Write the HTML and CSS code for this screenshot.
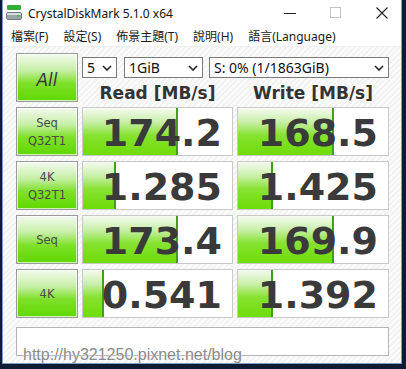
FILE: index.html
```html
<!DOCTYPE html>
<html lang="zh-Hant">
<head>
    <meta charset="UTF-8" />
    <title>CrystalDiskMark 5.1.0 x64</title>
    <link rel="stylesheet" href="styles.css">
</head>
<body>
   <div id="win">
       <div class="titlebar">
           <svg class="appicon" width="16" height="16" viewBox="0 0 16 16">
               <rect x="1" y="1" width="14" height="5" rx="1" fill="#2fae3a"/>
               <rect x="0.5" y="8.5" width="15" height="7" rx="1.5" fill="#d6dde0" stroke="#6d7a80"/>
               <rect x="1" y="11" width="14" height="4" fill="#9aa6ab"/>
               <circle cx="12.5" cy="12" r="1.2" fill="#35c43c"/>
           </svg>
           <span class="title">CrystalDiskMark 5.1.0 x64</span>
           <div class="ctls">
               <span class="ctl">
                   <svg width="12" height="12" viewBox="0 0 12 12"><path d="M0 6.5h12" stroke="#222" stroke-width="1"/></svg>
               </span>
               <span class="ctl">
                   <svg width="12" height="12" viewBox="0 0 12 12"><rect x="0.5" y="0.5" width="10" height="10" fill="none" stroke="#c4c4c4"/></svg>
               </span>
               <span class="ctl">
                   <svg width="12" height="12" viewBox="0 0 12 12"><path d="M0.5 0.5l11 11M11.5 0.5l-11 11" stroke="#222" stroke-width="1.1"/></svg>
               </span>
           </div>
       </div>
       <ul class="menu">
           <li>檔案(F)</li>
           <li>設定(S)</li>
           <li>佈景主題(T)</li>
           <li>說明(H)</li>
           <li>語言(Language)</li>
       </ul>
       <div class="main">
           <div class="grid">
               <div class="btn all">All</div>
               <div class="top">
                   <div class="opts">
                       <div class="sel s1"><span>5</span><svg width="10" height="6" viewBox="0 0 10 6"><path d="M1 1l4 4 4-4" fill="none" stroke="#222" stroke-width="1.6"/></svg></div>
                       <div class="sel s2"><span>1GiB</span><svg width="10" height="6" viewBox="0 0 10 6"><path d="M1 1l4 4 4-4" fill="none" stroke="#222" stroke-width="1.6"/></svg></div>
                       <div class="sel s3"><span>S: 0% (1/1863GiB)</span><svg width="10" height="6" viewBox="0 0 10 6"><path d="M1 1l4 4 4-4" fill="none" stroke="#222" stroke-width="1.6"/></svg></div>
                   </div>
                   <div class="heads">
                       <b>Read [MB/s]</b>
                       <b>Write [MB/s]</b>
                   </div>
               </div>

               <div class="btn">Seq<br>Q32T1</div>
               <div class="cell"><i style="width:64%"></i><span>174.2</span></div>
               <div class="cell"><i style="width:64%"></i><span>168.5</span></div>

               <div class="btn">4K<br>Q32T1</div>
               <div class="cell"><i style="width:22%"></i><span>1.285</span></div>
               <div class="cell"><i style="width:23%"></i><span>1.425</span></div>

               <div class="btn">Seq</div>
               <div class="cell"><i style="width:64%"></i><span>173.4</span></div>
               <div class="cell"><i style="width:64%"></i><span>169.9</span></div>

               <div class="btn">4K</div>
               <div class="cell"><i style="width:14%"></i><span>0.541</span></div>
               <div class="cell"><i style="width:23%"></i><span>1.392</span></div>
           </div>
           <div class="comment"></div>
           <p class="mark">http://hy321250.pixnet.net/blog</p>
       </div>
   </div>
</body>
</html>
```

FILE: styles.css
```css
*{
    padding:0;
    margin:0;
    list-style:none;
    box-sizing:border-box;
}
body{
    width: 406px;
    height: 369px;
    background:#0d1b35;
    overflow:hidden;
    font-family:"Noto Sans","Noto Sans CJK TC",sans-serif;
}
#win{
    width: 400px;
    height: 364px;
    margin-left:2px;
    background:#fff;
    border:1px solid #7f9cc4;
    border-top:none;
    display:flex;
    flex-direction:column;
    overflow:hidden;
    position:relative;
}
.titlebar{
    height: 26px;
    display:flex;
    align-items:center;
    padding-left:3px;
}
.appicon{
    display:block;
    margin-top:-2px;
}
.title{
    margin-left:6px;
    font-size:12px;
    color:#111;
}
.ctls{
    margin-left:auto;
    margin-right:-4px;
    display:flex;
    align-self:stretch;
}
.ctl{
    width: 46px;
    display:flex;
    align-items:center;
    justify-content:center;
}
.menu{
    height: 21px;
    display:flex;
    align-items:center;
    padding-left:8px;
    gap:15px;
    font-family:"Noto Sans","Noto Sans CJK TC",sans-serif;
    font-size:12px;
    color:#1a1a1a;
    border-bottom:1px solid #f0f0f0;
}
.main{
    flex:1;
    padding:6px 11px 0 13px;
    background:repeating-linear-gradient(135deg,#f3f3f3 0 2px,#fbfbfb 2px 4px);
}
.grid{
    display:grid;
    grid-template-columns:62px 151px 152px;
    grid-auto-rows:49px;
    column-gap:4px;
    row-gap:5px;
}
.btn{
    border:1px solid #9a9a9a;
    box-shadow:inset 0 0 0 1px rgba(255,255,255,0.7);
    background:linear-gradient(#f4faf0 0%,#c6efa6 35%,#7fe02a 62%,#5fd800 100%);
    display:flex;
    align-items:center;
    justify-content:center;
    text-align:center;
    font-family:"DejaVu Sans",sans-serif;
    font-size:11.5px;
    line-height:18px;
    color:#4a4a4a;
}
.all{
    font-size:17px;
    font-style:italic;
    color:#3a3a3a;
    padding-top:4px;
}
.top{
    grid-column:2 / 4;
    display:flex;
    flex-direction:column;
}
.opts{
    display:flex;
    margin-top:4px;
    height: 21px;
}
.sel{
    border:1px solid #7a7a7a;
    background:#fff;
    display:flex;
    align-items:center;
    justify-content:space-between;
    padding:0 4px 0 4px;
    font-size:14px;
    color:#111;
}
.s1{
    width: 35px;
}
.s2{
    width: 79px;
    margin-left:7px;
}
.s3{
    flex:1;
    margin-left:6px;
}
.heads{
    display:grid;
    grid-template-columns:151px 152px;
    column-gap:4px;
    margin-top:4px;
}
.heads b{
    text-align:center;
    font-family:"DejaVu Sans",sans-serif;
    font-size:17px;
    line-height:22px;
    color:#333;
}
.cell{
    border:1px solid #c9c9c9;
    background:#fff;
    position:relative;
    display:flex;
    align-items:center;
    justify-content:flex-end;
    padding-right:10px;
}
.cell i{
    position:absolute;
    top:0;
    bottom:0;
    left:0;
    background:linear-gradient(#f6fbf2 0%,#c8efa8 30%,#86e230 58%,#6fdc08 100%);
    border-right:2px solid #3f9f18;
}
.cell span{
    position:relative;
    font-family:"DejaVu Sans",sans-serif;
    font-weight:bold;
    font-size:38px;
    line-height:1;
    color:#3a3a3a;
    margin-top:2px;
}
.comment{
    margin-top:9px;
    height: 29px;
    width: 373px;
    border:1px solid #b5b5b5;
    background:#fff;
}
.mark{
    position:absolute;
    left:20px;
    top:346px;
    font-family:"Liberation Sans",Arial,sans-serif;
    font-size:16px;
    color:#8a8a8a;
    text-shadow:0 0 2px #fff,0 0 1px #fff;
}
```
